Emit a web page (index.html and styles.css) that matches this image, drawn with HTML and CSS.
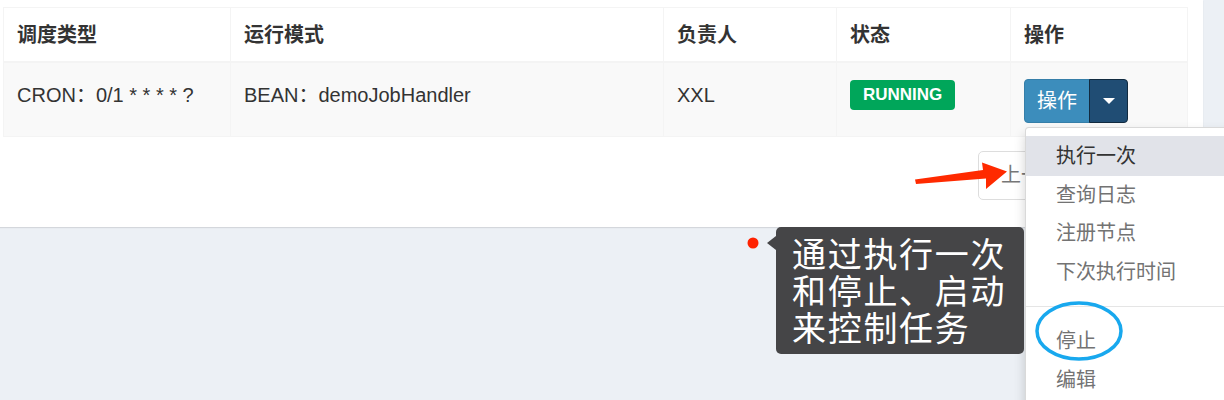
FILE: index.html
```html
<!DOCTYPE html>
<html lang="zh">
<head>
<meta charset="utf-8">
<title>任务管理</title>
<link rel="stylesheet" href="styles.css">
</head>
<body>
<div class="page">
  <div class="box">
    <table class="grid">
      <colgroup>
        <col class="c1"><col class="c2"><col class="c3"><col class="c4"><col class="c5">
      </colgroup>
      <thead>
        <tr><th>调度类型</th><th>运行模式</th><th>负责人</th><th>状态</th><th>操作</th></tr>
      </thead>
      <tbody>
        <tr>
          <td>CRON：0/1 * * * * ?</td>
          <td>BEAN：demoJobHandler</td>
          <td>XXL</td>
          <td><span class="badge">RUNNING</span></td>
          <td>
            <div class="btn-group">
              <button class="btn">操作</button>
              <button class="btn caret-btn"><span class="caret"></span></button>
              <ul class="menu">
                <li class="active">执行一次</li>
                <li>查询日志</li>
                <li>注册节点</li>
                <li>下次执行时间</li>
                <li class="divider"></li>
                <li>停止</li>
                <li>编辑</li>
                <li>删除</li>
              </ul>
            </div>
          </td>
        </tr>
      </tbody>
    </table>
    <div class="pager">
      <div class="info"></div>
      <ul class="pagination">
        <li>上一页</li>
        <li>1</li>
        <li>下一页</li>
      </ul>
    </div>
  </div>

  <div class="callout">通过执行一次<br>和停止、启动<br>来控制任务</div>

  <svg class="marks" width="1224" height="400" viewBox="0 0 1224 400" aria-hidden="true">
    <polygon points="915,179.5 983,170 982,162.5 1007,171.5 986,189 986,178.5 916,184" fill="#ff2a00"/>
    <circle cx="753" cy="243" r="5.5" fill="#ff2200"/>
    <ellipse cx="1079" cy="331" rx="42" ry="28" fill="none" stroke="#18a8ee" stroke-width="3.5"/>
  </svg>
</div>
</body>
</html>
```

FILE: styles.css
```css
html, body {
  margin: 0;
  padding: 0;
  overflow: hidden;
}
body {
  background: #ecf0f5;
  font-family: "Liberation Sans", "Noto Sans CJK SC", sans-serif;
  color: #333;
}
.page {
  position: relative;
  width: 1224px;
  height: 400px;
}
.box {
  width: 1203px;
  height: 227px;
  box-sizing: border-box;
  background: #fff;
  box-shadow: 0 1px 1px rgba(0, 0, 0, 0.1);
  padding: 7px 0 0 3px;
}
.grid {
  border-collapse: collapse;
  table-layout: fixed;
  width: 1184px;
  font-size: 20px;
  line-height: 28px;
}
.c1 { width: 227px; }
.c2 { width: 433px; }
.c3 { width: 173px; }
.c4 { width: 174px; }
.c5 { width: 177px; }
.grid th,
.grid td {
  border: 1px solid #f4f4f4;
  text-align: left;
  padding: 13px 13px 12px;
}
.grid thead th {
  border-bottom-width: 2px;
  font-weight: bold;
  color: #333;
}
.grid tbody td {
  background: #f9f9f9;
  vertical-align: top;
  padding: 18px 13px 13px;
  color: #333;
}
.badge {
  display: inline-block;
  vertical-align: top;
  margin-top: -1px;
  background: #00a65a;
  color: #fff;
  font-weight: bold;
  font-size: 17px;
  line-height: 17px;
  padding: 6px 13px 7px;
  border-radius: 4px;
}
.btn-group {
  position: relative;
  display: inline-flex;
  vertical-align: top;
  margin-top: -2px;
}
.btn {
  font-family: "Liberation Sans", "Noto Sans CJK SC", sans-serif;
  font-size: 20px;
  line-height: 28px;
  padding: 7px 12px;
  margin: 0;
  border: 1px solid #367fa9;
  background: #3c8dbc;
  color: #fff;
  border-radius: 4px 0 0 4px;
}
.caret-btn {
  width: 39px;
  padding: 0;
  margin-left: -1px;
  background: #204d74;
  border-color: #122b40;
  border-radius: 0 4px 4px 0;
  display: flex;
  align-items: center;
  justify-content: center;
}
.caret {
  width: 0;
  height: 0;
  border-top: 6px solid #fff;
  border-left: 6px solid transparent;
  border-right: 6px solid transparent;
}
.menu {
  position: absolute;
  top: calc(100% + 4px);
  left: 1px;
  width: 232px;
  margin: 0;
  padding: 8px 0;
  list-style: none;
  background: #fff;
  border: 1px solid rgba(0, 0, 0, 0.15);
  border-radius: 4px;
  box-shadow: 0 6px 12px rgba(0, 0, 0, 0.175);
  z-index: 10;
}
.menu li {
  padding: 5px 30px;
  font-size: 20px;
  line-height: 28.6px;
  color: #737373;
  white-space: nowrap;
}
.menu li:first-child {
  padding-top: 6px;
}
.menu li.active {
  background: #e1e3e9;
  color: #333;
}
.menu li.divider {
  height: 1px;
  padding: 0;
  margin: 15px 0;
  background: #e5e5e5;
}
.pager {
  display: grid;
  grid-template-columns: 975px auto;
  margin-top: 14px;
}
.pagination {
  display: flex;
  list-style: none;
  margin: 0;
  padding: 0;
}
.pagination li {
  border: 1px solid #ddd;
  margin-left: -1px;
  padding: 9px 21px 9px 22px;
  font-size: 20px;
  line-height: 28.6px;
  color: #777;
  background: #fff;
  white-space: nowrap;
}
.pagination li:first-child {
  margin-left: 0;
  border-radius: 5px 0 0 5px;
}
.callout {
  position: absolute;
  left: 776px;
  top: 227px;
  width: 248px;
  height: 127px;
  box-sizing: border-box;
  padding: 7px 0 0 16px;
  background: #454547;
  border-radius: 5px;
  color: #fff;
  font-family: "Noto Sans CJK SC", sans-serif;
  font-size: 34px;
  line-height: 37px;
  letter-spacing: 1.7px;
  white-space: nowrap;
  z-index: 20;
}
.callout::before {
  content: "";
  position: absolute;
  left: -9px;
  top: 9px;
  width: 0;
  height: 0;
  border-right: 9px solid #454547;
  border-top: 7px solid transparent;
  border-bottom: 7px solid transparent;
}
.marks {
  position: absolute;
  left: 0;
  top: 0;
  pointer-events: none;
  z-index: 30;
}
```
